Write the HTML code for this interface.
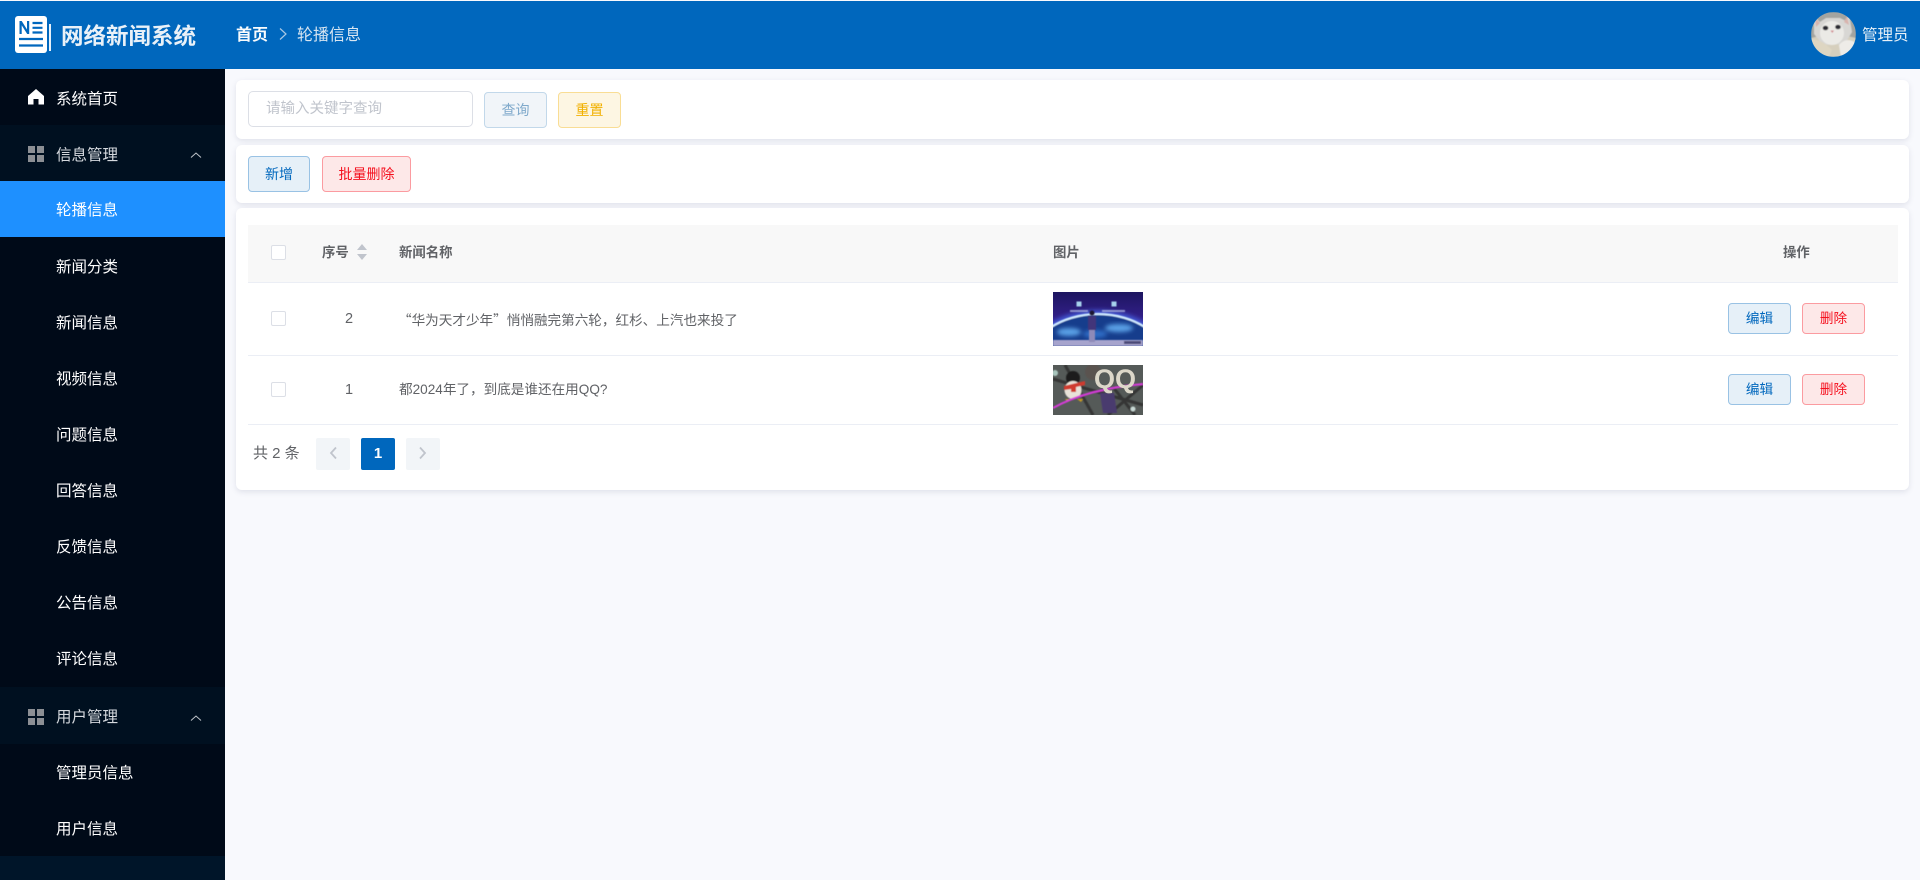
<!DOCTYPE html>
<html lang="zh-CN"><head><meta charset="utf-8"><title>网络新闻系统</title>
<style>
*{box-sizing:border-box;margin:0;padding:0}
html,body{width:1920px;height:880px;overflow:hidden;background:#f8f9fd;font-family:"Liberation Sans","Noto Sans CJK SC",sans-serif;}
.a{position:absolute;white-space:nowrap}
.hdr{left:0;top:1px;width:1920px;height:68px;background:#0067bd;position:absolute}
.side{left:0;top:69px;width:225px;height:811px;background:#001529;position:absolute}
.m{position:absolute;left:0;width:225px;height:56px;line-height:61px;color:#fff;font-size:15.5px;padding-left:56px;background:#000a18}
.g{background:#001020;color:#d5d9de}
.card{position:absolute;left:236px;width:1673px;background:#fff;border-radius:6px;box-shadow:0 2px 6px rgba(60,70,110,.13)}
.btn{position:absolute;height:36px;line-height:35px;text-align:center;border:1px solid;border-radius:4px;font-size:14px}
.blue{background:#e6f0f8;border-color:#99c2e4;color:#0067bd}
.red{background:#fde8e8;border-color:#fb9ba0;color:#f5101e}
.line{position:absolute;left:248px;width:1650px;height:1px;background:#ebeef5}
.cb{position:absolute;left:271px;width:15px;height:15px;border:1px solid #dcdfe6;border-radius:2px;background:#fff}
.t{position:absolute;font-size:13.6px;color:#606266;white-space:nowrap;line-height:20px}
.b{font-weight:700;color:#606266;font-size:13.4px}
</style></head><body>
<div class="hdr"></div>
<svg class="a" style="left:14px;top:15px" width="38" height="39" viewBox="0 0 38 39">
<rect x="1" y="1" width="32" height="37" rx="3" fill="#fff"/>
<rect x="35" y="9" width="2" height="27" fill="#fff" opacity=".9"/>
<path d="M5.500 19V6h2.200l5.300 8.500V6h2.200v13h-2l-5.500-8.800V19z" fill="#0067bd"/>
<path d="M18.500 8h10M18.500 12.800h10M18.500 17.500h10M5 24h24M5 30.500h24" stroke="#0067bd" stroke-width="2.200"/>
</svg>
<div class="a" style="left:61px;top:20px;font-size:22.5px;line-height:34px;font-weight:700;color:#e9f1f8">网络新闻系统</div>
<div class="a" style="left:236px;top:24px;font-size:16px;line-height:24px;color:#f8fbfd;font-weight:700">首页</div>
<svg class="a" style="left:278px;top:27px" width="10" height="14" viewBox="0 0 10 14"><path d="M2 1.500 8 7l-6 5.500" fill="none" stroke="#a9c8e4" stroke-width="1.200"/></svg>
<div class="a" style="left:297px;top:24px;font-size:16px;line-height:24px;color:#d8e6f2">轮播信息</div>
<svg class="a" style="left:1811px;top:12px" width="45" height="45" viewBox="0 0 45 45">
<defs><clipPath id="c"><circle cx="22.500" cy="22.500" r="22.500"/></clipPath><filter id="bl1" x="-5%" y="-5%" width="110%" height="110%"><feGaussianBlur stdDeviation=".6"/></filter></defs>
<g clip-path="url(#c)"><g filter="url(#bl1)"><rect width="45" height="45" fill="#a3a4a0"/>
<path d="M0 26 Q22 20 45 26V45H0z" fill="#d6cfbd"/>
<path d="M3 4 9 10 15 6 29 6 35 9 38 2 41 20 34 32 12 33 3 22z" fill="#d8d7d4"/>
<path d="M4 6 9 11 5 15zM36 4 33 10 38 13z" fill="#d8b4ae"/>
<ellipse cx="21" cy="21" rx="12" ry="12" fill="#ebeae6"/>
<ellipse cx="14.500" cy="16" rx="2.800" ry="2.300" fill="#2c2c32"/><ellipse cx="27" cy="15" rx="2.800" ry="2.300" fill="#2c2c32"/>
<path d="M19.500 18.500h3.500l-1.700 2.500z" fill="#d2898f"/>
<path d="M28 33 Q34 25 44 30L42 45H30z" fill="#eeece8"/>
<path d="M0 27Q12 28 21 38L18 45H0z" fill="#ded6c2"/>
</g></g></svg>
<div class="a" style="left:1862px;top:25px;font-size:15.500px;line-height:22px;color:#e8f1f8">管理员</div>

<div class="side"></div>
<div class="m" style="top:69px">系统首页</div>
<div class="m g" style="top:125px">信息管理</div>
<div class="m" style="top:181px;background:#1e90ff;line-height:59px">轮播信息</div>
<div class="m" style="top:237px">新闻分类</div>
<div class="m" style="top:293px">新闻信息</div>
<div class="m" style="top:349px">视频信息</div>
<div class="m" style="top:405px">问题信息</div>
<div class="m" style="top:461px">回答信息</div>
<div class="m" style="top:517px">反馈信息</div>
<div class="m" style="top:573px">公告信息</div>
<div class="m" style="top:629px;height:58px">评论信息</div>
<div class="m g" style="top:687px;height:57px">用户管理</div>
<div class="m" style="top:744px;line-height:59px">管理员信息</div>
<div class="m" style="top:800px;line-height:59px">用户信息</div>
<svg class="a" style="left:28px;top:89px" width="16" height="16" viewBox="0 0 16 16"><path d="M8 0 16 7v8.500h-5.500V10h-5v5.500H0V7z" fill="#fff"/></svg>
<svg class="a" style="left:28px;top:146px" width="16" height="16"><path d="M0 0h7v7H0zM9 0h7v7H9zM0 9h7v7H0zM9 9h7v7H9z" fill="#8c8f94"/></svg>
<svg class="a" style="left:28px;top:709px" width="16" height="16"><path d="M0 0h7v7H0zM9 0h7v7H9zM0 9h7v7H0zM9 9h7v7H9z" fill="#8c8f94"/></svg>
<svg class="a" style="left:190px;top:151px" width="12" height="8"><path d="M1 6.500 6 2l5 4.500" fill="none" stroke="#bfc4ca" stroke-width="1"/></svg>
<svg class="a" style="left:190px;top:714px" width="12" height="8"><path d="M1 6.500 6 2l5 4.500" fill="none" stroke="#bfc4ca" stroke-width="1"/></svg>

<div class="card" style="top:80px;height:59px"></div>
<div class="card" style="top:145px;height:58px"></div>
<div class="card" style="top:208px;height:282px"></div>

<div class="a" style="left:248px;top:91px;width:225px;height:36px;border:1px solid #dcdfe6;border-radius:5px;background:#fff;padding-left:17px;line-height:35px;font-size:14.500px;color:#c0c4cc">请输入关键字查询</div>
<div class="btn" style="left:484px;top:92px;width:63px;background:#f1f5f9;border-color:#c2d8ea;color:#7fa9cb">查询</div>
<div class="btn" style="left:558px;top:92px;width:63px;background:#fdf6e3;border-color:#f9dd94;color:#f1b000">重置</div>
<div class="btn blue" style="left:248px;top:156px;width:62px">新增</div>
<div class="btn red" style="left:322px;top:156px;width:89px">批量删除</div>

<div class="a" style="left:248px;top:225px;width:1650px;height:57px;background:#f8f8f8"></div>
<div class="line" style="top:282px"></div>
<div class="line" style="top:355px"></div>
<div class="line" style="top:424px"></div>
<div class="cb" style="top:245px"></div>
<div class="cb" style="top:311px"></div>
<div class="cb" style="top:382px"></div>
<div class="t b" style="left:322px;top:243px">序号</div>
<svg class="a" style="left:356px;top:244px" width="12" height="16"><path d="M6 0l5 6H1zM6 16l5-6H1z" fill="#c0c4cc"/></svg>
<div class="t b" style="left:399px;top:243px">新闻名称</div>
<div class="t b" style="left:1053px;top:243px">图片</div>
<div class="t b" style="left:1783px;top:243px">操作</div>

<div class="t" style="left:339px;top:309px;width:20px;text-align:center;font-size:14.500px">2</div>
<div class="t" style="left:339px;top:380px;width:20px;text-align:center;font-size:14.500px">1</div>
<div class="t" style="left:398px;top:309px;font-family:'Noto Sans CJK SC',sans-serif">“华为天才少年”悄悄融完第六轮，红杉、上汽也来投了</div>
<div class="t" style="left:399px;top:380px">都2024年了，到底是谁还在用QQ?</div>

<svg class="a" style="left:1053px;top:292px" width="90" height="54" viewBox="0 0 90 54">
<defs><filter id="bl2" x="-5%" y="-5%" width="110%" height="110%"><feGaussianBlur stdDeviation=".6"/></filter>
<filter id="bl3" x="-20%" y="-20%" width="140%" height="140%"><feGaussianBlur stdDeviation="2"/></filter>
<linearGradient id="sky" x1="0" y1="0" x2="0" y2="1"><stop offset="0" stop-color="#1d1560"/><stop offset=".5" stop-color="#33208a"/><stop offset="1" stop-color="#33208a"/></linearGradient></defs>
<rect width="90" height="54" fill="url(#sky)"/>
<ellipse cx="45" cy="76" rx="76" ry="58" fill="#3f55d0" filter="url(#bl3)"/>
<g filter="url(#bl2)">
<ellipse cx="45" cy="76" rx="72" ry="54" fill="#173c8c" stroke="#cfeaff" stroke-width="2.200"/>
</g>
<g filter="url(#bl3)"><ellipse cx="16" cy="40" rx="12" ry="4" fill="#5aa0e6"/><ellipse cx="66" cy="36" rx="14" ry="4" fill="#5aa0e6"/><ellipse cx="42" cy="42" rx="12" ry="4" fill="#2f6cc4"/></g>
<g filter="url(#bl2)">
<rect y="48" width="90" height="6" fill="#a7a4cd"/>
<rect x="23.500" y="9.500" width="5" height="5" fill="#a8d4ee"/><rect x="58.500" y="9.500" width="5" height="5" fill="#a8d4ee"/>
<rect x="17" y="18" width="18" height="2" fill="#b8c0e8" opacity=".7"/><rect x="49" y="18" width="23" height="2" fill="#b8c0e8" opacity=".7"/>
<rect x="35" y="24" width="8" height="14" fill="#42367a"/><rect x="36" y="38" width="6" height="12" fill="#8e8ab8"/><circle cx="39" cy="21" r="2.500" fill="#1a1430"/>
<rect x="71" y="49" width="17" height="3" fill="#4b4a78"/>
</g></svg>

<svg class="a" style="left:1053px;top:365px" width="90" height="50" viewBox="0 0 90 50">
<rect width="90" height="50" fill="#555a58"/>
<g filter="url(#bl2)">
<path d="M0 14 90 40M12 0 40 50M60 22 82 50M90 20 55 50" stroke="#343634" stroke-width="3"/>
<circle cx="2" cy="8" r="3" fill="#a8c4bc"/>
<circle cx="40" cy="7" r="8" fill="#5a5250"/>
<path d="M47 28h14l3 20H50z" fill="#4a3a6e"/>
<ellipse cx="20" cy="13" rx="7" ry="7" fill="#1e1c1c"/><ellipse cx="20" cy="25" rx="8.500" ry="9" fill="#e8e2d8"/>
<path d="M11 21 32 16v4l-9 2v5h-5v-3l-7 1z" fill="#cf3b2e"/>
<path d="M12 34h6l-3 3zM24 34h6l-2 3z" fill="#c89a1e"/>
<path d="M0 43Q34 24 90 19" fill="none" stroke="#d53bd8" stroke-width="1.900"/>
<circle cx="80" cy="44" r="2.500" fill="#c8d8d4"/>
</g>
<text x="41" y="23" font-family="'Liberation Sans',sans-serif" font-size="27" font-weight="700" fill="#dcd7c9">QQ</text>
</svg>

<div class="btn blue" style="left:1728px;top:303px;width:63px;height:31px;line-height:30px;font-size:13.600px">编辑</div>
<div class="btn red" style="left:1802px;top:303px;width:63px;height:31px;line-height:30px;font-size:13.600px">删除</div>
<div class="btn blue" style="left:1728px;top:374px;width:63px;height:31px;line-height:30px;font-size:13.600px">编辑</div>
<div class="btn red" style="left:1802px;top:374px;width:63px;height:31px;line-height:30px;font-size:13.600px">删除</div>

<div class="a" style="left:253px;top:443px;font-size:15px;line-height:22px;color:#606266">共 2 条</div>
<div class="a" style="left:316px;top:438px;width:34px;height:32px;background:#f2f5f8;border-radius:2px"></div>
<svg class="a" style="left:328px;top:446px" width="10" height="14"><path d="M8 1.500 3 7l5 5.500" fill="none" stroke="#c0c4cc" stroke-width="1.800"/></svg>
<div class="a" style="left:361px;top:438px;width:34px;height:32px;background:#0067bd;border-radius:2px;color:#fff;font-size:15px;font-weight:700;line-height:32px;text-align:center">1</div>
<div class="a" style="left:406px;top:438px;width:34px;height:32px;background:#f2f5f8;border-radius:2px"></div>
<svg class="a" style="left:418px;top:446px" width="10" height="14"><path d="M2 1.500 7 7l-5 5.500" fill="none" stroke="#c0c4cc" stroke-width="1.800"/></svg>
</body></html>
